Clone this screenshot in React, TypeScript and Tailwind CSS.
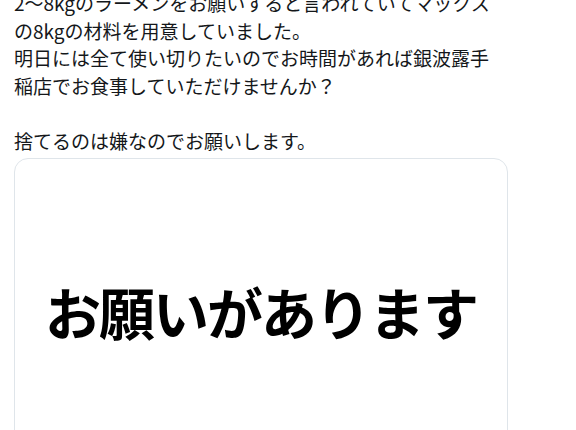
import React from "react";

export default function App() {
  return (
    <div className="w-[576px] h-[430px] overflow-hidden bg-white" style={{ fontFamily: '"Noto Sans CJK JP", "Noto Sans", sans-serif' }}>
      <div className="w-[494px] ml-[14px] mt-[-11px]">
        <p className="w-[490px] text-[19px] leading-[27.5px] text-[#14171a]">
          2〜8kgのラーメンをお願いすると言われていてマックスの8kgの材料を用意していました。
          <br />
          明日には全て使い切りたいのでお時間があれば銀波露手稲店でお食事していただけませんか？
          <br />
          <br />
          捨てるのは嫌なのでお願いします。
        </p>
        <div className="mt-[4px] h-[400px] rounded-[14px] border border-[#dfe5ea] bg-white flex justify-center pt-[117px]">
          <div className="text-[56px] font-bold leading-[70px] text-black tracking-[-2px]">お願いがあります</div>
        </div>
      </div>
    </div>
  );
}
